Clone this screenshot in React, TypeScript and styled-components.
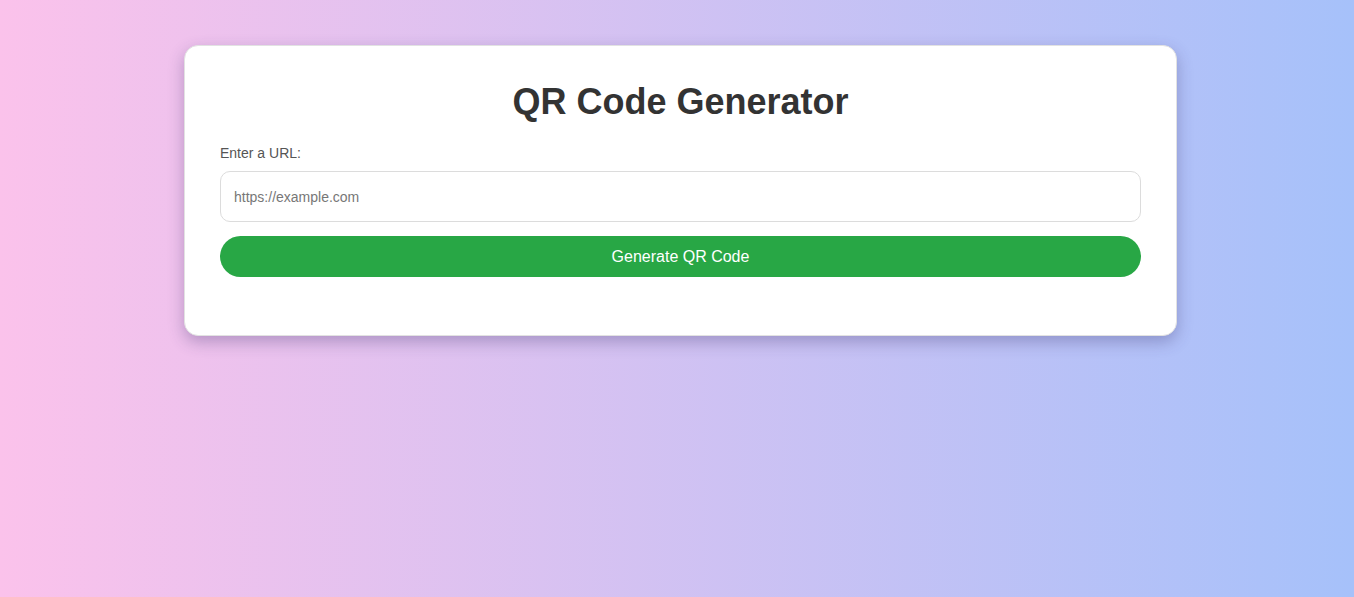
import React from "react";
import styled, { createGlobalStyle } from "styled-components";

const GlobalStyle = createGlobalStyle`
  html, body { margin: 0; padding: 0; }
  body {
    min-height: 597px;
    font-family: "Liberation Sans", Arial, sans-serif;
    background: linear-gradient(to right, #fbc2eb, #a6c1fa);
  }
`;

const Page = styled.div`
  padding-top: 45px;
  padding-left: 184px;
  min-height: 552px;
`;

const Card = styled.div`
  box-sizing: border-box;
  width: 993px;
  background: #fff;
  border-radius: 14px;
  border: 1px solid #e2e2e2;
  box-shadow: 0 6px 16px rgba(60, 50, 110, 0.32);
  padding: 35px 35px 58px;
`;

const Title = styled.h1`
  margin: 0 0 23px;
  text-align: center;
  font-size: 36px;
  line-height: 41px;
  font-weight: 700;
  color: #333;
`;

const Label = styled.label`
  display: block;
  font-size: 14px;
  line-height: 16px;
  color: #555;
  margin-bottom: 10px;
`;

const Input = styled.input`
  box-sizing: border-box;
  display: block;
  width: 100%;
  height: 51px;
  padding: 0 13px;
  border: 1px solid #dcdcdc;
  border-radius: 10px;
  font-family: "Liberation Sans", Arial, sans-serif;
  font-size: 14px;
  color: #333;
  outline: none;
  &::placeholder { color: #777; }
`;

const Button = styled.button`
  display: block;
  width: 100%;
  height: 41px;
  margin-top: 14px;
  border: none;
  border-radius: 21px;
  background: #28a745;
  color: #fff;
  font-family: "Liberation Sans", Arial, sans-serif;
  font-size: 16px;
  cursor: pointer;
`;

export default function App() {
  return (
    <>
      <GlobalStyle />
      <Page>
        <Card>
          <Title>QR Code Generator</Title>
          <Label htmlFor="url">Enter a URL:</Label>
          <Input id="url" type="text" placeholder="https://example.com" />
          <Button>Generate QR Code</Button>
        </Card>
      </Page>
    </>
  );
}
